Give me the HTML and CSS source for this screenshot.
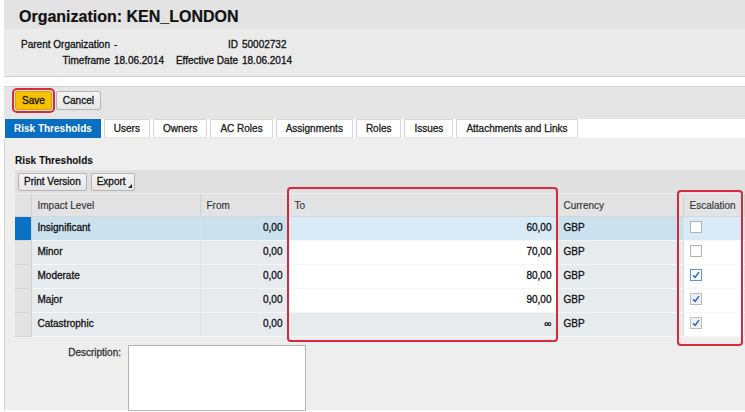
FILE: index.html
```html
<!DOCTYPE html>
<html>
  <head>
    <meta charset='UTF-8'>
    <title>Organization: KEN_LONDON</title>
    <link rel="stylesheet" href="styles.css">
  </head>
  <body>
    <div class='page'>
      <div class='obj-header'>
        <h1 class='obj-header__title'>Organization: KEN_LONDON</h1>
        <div class='obj-header__info'>
          <span class='lbl'>Parent Organization</span><span class='val'>-</span>
          <span class='lbl'>ID</span><span class='val'>50002732</span>
          <span class='lbl'>Timeframe</span><span class='val'>18.06.2014</span>
          <span class='lbl'>Effective Date</span><span class='val'>18.06.2014</span>
        </div>
      </div>

      <div class='actions'>
        <div class='btn btn--save'>Save</div>
        <div class='btn'>Cancel</div>
      </div>

      <div class='tabs'>
        <div class='tab tab--active'>Risk Thresholds</div>
        <div class='tab'>Users</div>
        <div class='tab'>Owners</div>
        <div class='tab'>AC Roles</div>
        <div class='tab'>Assignments</div>
        <div class='tab'>Roles</div>
        <div class='tab'>Issues</div>
        <div class='tab'>Attachments and Links</div>
      </div>

      <div class='panel'>
        <h2 class='panel__title'>Risk Thresholds</h2>
        <div class='tbl-toolbar'>
          <div class='btn btn--small'>Print Version</div>
          <div class='btn btn--small btn--menu'>Export</div>
        </div>

        <table class='grid'>
          <colgroup>
            <col class='c-sel'><col class='c-impact'><col class='c-from'><col class='c-to'><col class='c-cur'><col class='c-esc'>
          </colgroup>
          <thead>
            <tr>
              <th class='sel'></th>
              <th>Impact Level</th>
              <th>From</th>
              <th>To</th>
              <th>Currency</th>
              <th>Escalation</th>
            </tr>
          </thead>
          <tbody>
            <tr class='is-selected'>
              <td class='sel'></td>
              <td class='ro'>Insignificant</td>
              <td class='ro num'>0,00</td>
              <td class='num'>60,00</td>
              <td class='ro'>GBP</td>
              <td><span class='chk'></span></td>
            </tr>
            <tr>
              <td class='sel'></td>
              <td class='ro'>Minor</td>
              <td class='ro num'>0,00</td>
              <td class='num'>70,00</td>
              <td class='ro'>GBP</td>
              <td><span class='chk'></span></td>
            </tr>
            <tr>
              <td class='sel'></td>
              <td class='ro'>Moderate</td>
              <td class='ro num'>0,00</td>
              <td class='num'>80,00</td>
              <td class='ro'>GBP</td>
              <td><span class='chk chk--on chk--focus'><svg viewBox='0 0 12 12'><path d='M2.5 6.2 L5 8.8 L9.6 2.6'/></svg></span></td>
            </tr>
            <tr>
              <td class='sel'></td>
              <td class='ro'>Major</td>
              <td class='ro num'>0,00</td>
              <td class='num'>90,00</td>
              <td class='ro'>GBP</td>
              <td><span class='chk chk--on'><svg viewBox='0 0 12 12'><path d='M2.5 6.2 L5 8.8 L9.6 2.6'/></svg></span></td>
            </tr>
            <tr>
              <td class='sel'></td>
              <td class='ro'>Catastrophic</td>
              <td class='ro num'>0,00</td>
              <td class='ro num'>&infin;</td>
              <td class='ro'>GBP</td>
              <td><span class='chk chk--on'><svg viewBox='0 0 12 12'><path d='M2.5 6.2 L5 8.8 L9.6 2.6'/></svg></span></td>
            </tr>
          </tbody>
        </table>

        <div class='desc'>
          <div class='desc__label'>Description:</div>
          <div class='desc__box'></div>
        </div>
      </div>

      <!-- annotation marks -->
      <div class='mark mark--to'></div>
      <div class='mark mark--esc'></div>
    </div>
  </body>
</html>
```

FILE: styles.css
```css
html,
body {
	margin: 0;
}

body {
	font-family: "Liberation Sans", Arial, sans-serif;
	font-size: 10px;
	color: #111;
	background: #fff;
	-webkit-text-stroke: 0.3px;
}

.page {
	position: relative;
	height: 412px;
	padding-left: 4px;
	overflow: hidden;
}

/* object header */
.obj-header {
	background: #ebebeb;
	border-bottom: 1px solid #d0d0d0;
}

  .obj-header__title {
  	margin: 0;
  	height: 29px;
  	box-sizing: border-box;
  	padding: 4px 0 0 15px;
  	line-height: 25px;
  	font-size: 16px;
  	font-weight: bold;
  	color: #111;
  	background: #e3e3e3;
  	-webkit-text-stroke: 0.2px;
  }

  .obj-header__info {
  	display: grid;
  	grid-template-columns: 90px 52px 68px auto;
  	column-gap: 4px;
  	padding: 8px 0 7px 16px;
  	line-height: 16px;
  }

  .obj-header__info .lbl {
  	text-align: right;
  }

/* action bar */
.actions {
	display: flex;
	gap: 4px;
	margin-top: 9px;
	height: 33px;
	box-sizing: border-box;
	padding: 4px 0 0 11px;
	border-top: 1px solid #d0d0d0;
	background: #e5e5e5;
}

.btn {
	height: 19px;
	box-sizing: border-box;
	padding: 0 6px;
	line-height: 17px;
	border: 1px solid #b4b4b4;
	border-radius: 2px;
	background: linear-gradient(to bottom, #f4f4f4, #e6e6e6);
	color: #111;
}

.btn--save {
	padding: 0 6px;
	background: #f8c000;
	border-color: #d9a400;
	outline: 2px solid #d42a3c;
	outline-offset: 1px;
}

.btn--small {
	height: 18px;
	line-height: 16px;
	padding: 0 5px;
}

.btn--menu {
	position: relative;
	padding-right: 8px;
}

.btn--menu::after {
	content: '';
	position: absolute;
	right: 2px;
	bottom: 2px;
	border-style: solid;
	border-width: 0 0 4px 4px;
	border-color: transparent transparent #222 transparent;
}

/* tabs */
.tabs {
	display: flex;
	gap: 3px;
	margin-left: 1px;
	background: #fff;
}

  .tab {
  	height: 19px;
  	box-sizing: border-box;
  	padding: 0 9px;
  	line-height: 17px;
  	border: 1px solid #d6d6d6;
  	border-bottom-color: #e4e4e4;
  	background: #fff;
  	color: #222;
  }

  .tab--active {
  	padding: 0 8px;
  	border-color: #0a6fc2;
  	background: #0a6fc2;
  	color: #fff;
  	font-weight: bold;
  	-webkit-text-stroke: 0;
  }

/* content panel */
.panel {
	height: 272px;
	box-sizing: border-box;
	padding: 16px 0 0 10px;
	border-left: 1px solid #d2d2d2;
	background: #eeeeee;
}

  .panel__title {
  	margin: 0;
  	font-size: 10px;
  	line-height: 14px;
  	font-weight: bold;
  	-webkit-text-stroke: 0.1px;
  }

  .tbl-toolbar {
  	display: flex;
  	gap: 4px;
  	margin-top: 2px;
  	height: 23px;
  	box-sizing: border-box;
  	padding: 3px;
  	background: #e0e0e0;
  }

/* table */
.grid {
	margin-top: 1px;
	width: 730px;
	table-layout: fixed;
	border-collapse: collapse;
}

  .c-sel { width: 16px; }
  .c-impact { width: 169px; }
  .c-from { width: 88px; }
  .c-to { width: 269px; }
  .c-cur { width: 126px; }

  .grid th {
  	height: 22px;
  	padding: 0 6px;
  	text-align: left;
  	font-weight: normal;
  	color: #333;
  	background: #e3e3e3;
  	border-right: 1px solid #d2d2d2;
  	border-bottom: 1px solid #d6d6d6;
  	-webkit-text-stroke: 0.15px;
  }

  .grid td {
  	height: 24px;
  	box-sizing: border-box;
  	padding: 5px 6px 0;
  	vertical-align: top;
  	line-height: 12px;
  	background: #fff;
  	border-right: 1px solid #dcdfe2;
  	border-bottom: 1px solid #f6f6f6;
  }

  .grid td.ro {
  	background: #e8ebee;
  }

  .grid td.num {
  	text-align: right;
  	padding-right: 5px;
  }

  .grid .sel {
  	padding: 0;
  	background: #e3e3e3;
  	border-right: 1px solid #d0d0d0;
  }

  .grid td.sel {
  	background: #e3e3e3;
  	border-bottom: 1px solid #d6d6d6;
  }

  .grid tr.is-selected td {
  	background: #d8ebf7;
  }

  .grid tr.is-selected td.ro {
  	background: #cce1ee;
  }

  .grid tr.is-selected td.sel {
  	background: #0a72c6;
  }

  .chk {
  	display: block;
  	width: 12px;
  	height: 12px;
  	box-sizing: border-box;
  	margin: -1px 0 0 0;
  	border: 1px solid #b0b0b0;
  	background: #fff;
  }

  .chk--on {
  	background: #f0f0f0;
  	border-color: #bdbdbd;
  }

  .chk--focus {
  	border-color: #5b93de;
  	background: #fff;
  }

  .chk svg {
  	display: block;
  	width: 10px;
  	height: 10px;
  }

  .chk path {
  	fill: none;
  	stroke: #1a68c8;
  	stroke-width: 1.8;
  }

/* description */
.desc {
	display: flex;
	gap: 7px;
	margin-top: 8px;
}

  .desc__label {
  	width: 106px;
  	padding-top: 2px;
  	line-height: 12px;
  	text-align: right;
  	color: #333;
  }

  .desc__box {
  	width: 178px;
  	height: 66px;
  	box-sizing: border-box;
  	border: 1px solid #b5b5b5;
  	background: #fff;
  }

/* red annotation frames drawn over the grid */
.mark {
	position: absolute;
	box-sizing: border-box;
	border: 2px solid #d42a3c;
	border-radius: 4px;
}

.mark--to {
	left: 287px;
	top: 187px;
	width: 271px;
	height: 155px;
}

.mark--esc {
	left: 677px;
	top: 190px;
	width: 66px;
	height: 156px;
}
```
